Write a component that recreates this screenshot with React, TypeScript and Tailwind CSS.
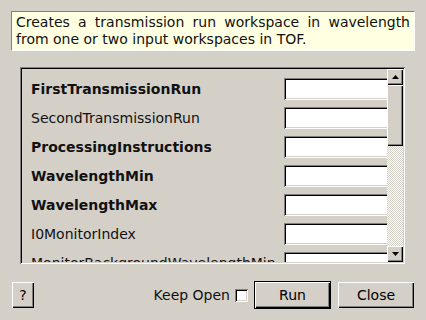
import React from "react";

const rows: { label: string; bold: boolean }[] = [
  { label: "FirstTransmissionRun", bold: true },
  { label: "SecondTransmissionRun", bold: false },
  { label: "ProcessingInstructions", bold: true },
  { label: "WavelengthMin", bold: true },
  { label: "WavelengthMax", bold: true },
  { label: "I0MonitorIndex", bold: false },
  { label: "MonitorBackgroundWavelengthMin", bold: false },
];

const raised =
  "shadow-[inset_1px_1px_0_#ffffff,inset_-1px_-1px_0_#000000,inset_-2px_-2px_0_#808080]";
const sunken =
  "shadow-[inset_1px_1px_0_#808080,inset_-1px_-1px_0_#ffffff,inset_2px_2px_0_#000000,inset_-2px_-2px_0_#d4d0c8]";

function Arrow({ up }: { up: boolean }) {
  return (
    <svg width="7" height="4" viewBox="0 0 7 4">
      {up ? <polygon points="3.5,0 7,4 0,4" fill="#000" /> : <polygon points="0,0 7,0 3.5,4" fill="#000" />}
    </svg>
  );
}

export default function App() {
  return (
    <div
      className="w-[426px] h-[320px] bg-[#d4d0c8] text-black flex flex-col overflow-hidden"
      style={{ fontFamily: '"DejaVu Sans", sans-serif' }}
    >
      <div className="mt-[11px] mx-[11px] h-[40px] bg-[#ffffe1] border-t border-l border-[#808080] border-r-white border-b-white border-r border-b px-[4px] pt-[2px] text-[14px] leading-[17px] text-justify text-[#111]">
        Creates a transmission run workspace in wavelength from one or two input workspaces in TOF.
      </div>

      <div className={`mt-[16px] ml-[20px] w-[385px] h-[197px] p-[2px] flex ${sunken}`}>
        <div className="flex-1 overflow-hidden flex flex-col pt-[9px] pl-[9px]">
          {rows.map((r) => (
            <div key={r.label} className="flex items-center h-[22px] mb-[7px] shrink-0">
              <div
                className={`w-[253px] shrink-0 text-[14px] whitespace-nowrap text-[#111] ${r.bold ? "font-bold" : ""}`}
              >
                {r.label}
              </div>
              <div className={`w-[120px] h-[22px] shrink-0 bg-white ${sunken}`} />
            </div>
          ))}
        </div>
        <div className="w-[16px] flex flex-col shrink-0">
          <div className={`h-[16px] bg-[#d4d0c8] flex items-center justify-center ${raised}`}>
            <Arrow up />
          </div>
          <div className={`h-[61px] bg-[#d4d0c8] ${raised}`} />
          <div className="flex-1 bg-[repeating-conic-gradient(#d4d0c8_0_25%,#ffffff_0_50%)] bg-[length:2px_2px]" />
          <div className={`h-[16px] bg-[#d4d0c8] flex items-center justify-center ${raised}`}>
            <Arrow up={false} />
          </div>
        </div>
      </div>

      <div className="mt-[17px] flex items-center h-[28px] pr-[12px]">
        <div
          className={`ml-[12px] w-[22px] h-[26px] flex items-center justify-center text-[14px] ${raised}`}
        >
          ?
        </div>
        <div className="ml-auto text-[14px] text-[#111] whitespace-nowrap">Keep Open</div>
        <div className={`ml-[5px] w-[13px] h-[13px] bg-white ${sunken}`} />
        <div className="ml-[6px] w-[77px] h-[28px] border border-black">
          <div className={`w-full h-full flex items-center justify-center text-[14px] ${raised}`}>Run</div>
        </div>
        <div
          className={`ml-[7px] w-[76px] h-[26px] flex items-center justify-center text-[14px] ${raised}`}
        >
          Close
        </div>
      </div>
    </div>
  );
}
